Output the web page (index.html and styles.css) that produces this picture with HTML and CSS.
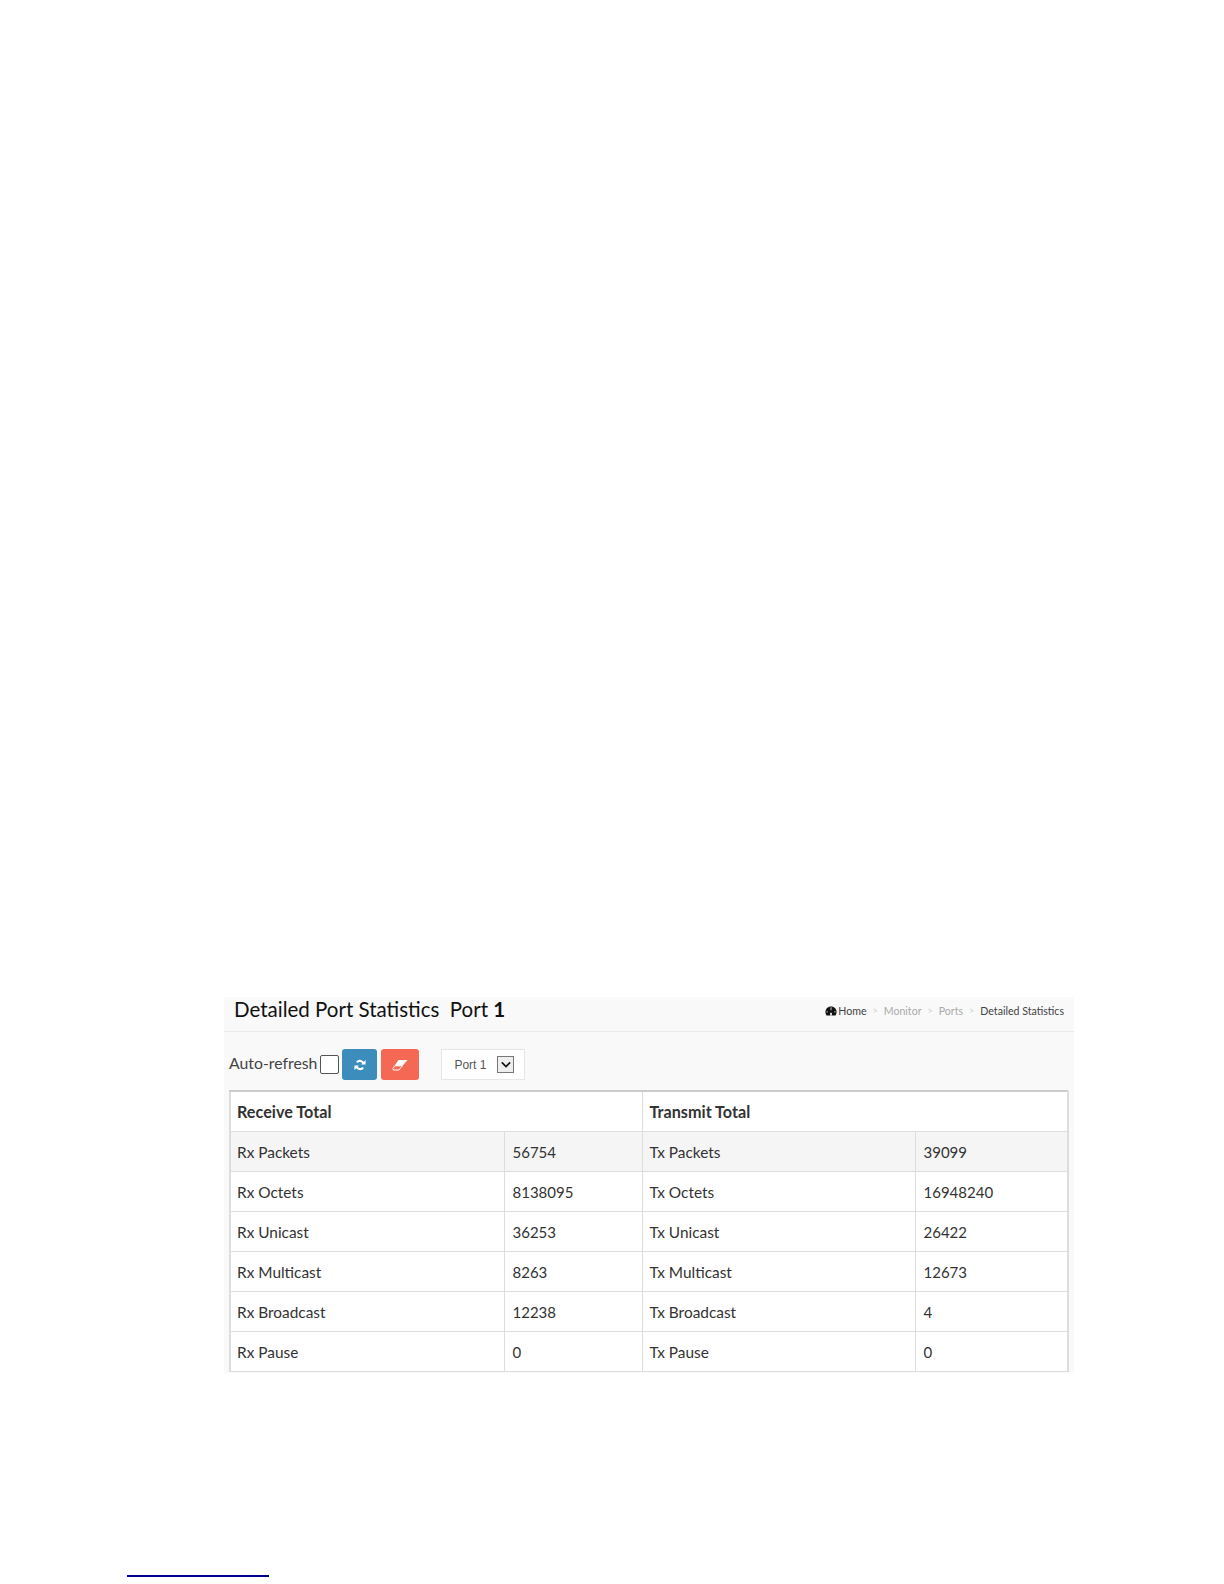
FILE: index.html
```html
<!DOCTYPE html>
<html lang="en">
<head>
<meta charset="utf-8">
<title>Detailed Port Statistics Port 1</title>
<link rel="stylesheet" href="styles.css">
</head>
<body>
<main class="panel">
  <header class="panel-head">
    <h1 class="title">Detailed Port Statistics&nbsp; Port <b>1</b></h1>
    <nav class="crumbs">
      <svg class="gauge" viewBox="0 0 14 12" aria-hidden="true"><path d="M7 .5C3.200.5.300 3.400.300 7.200c0 1.500.5 2.900 1.300 4.100h10.800c.8-1.200 1.300-2.600 1.300-4.100C13.700 3.400 10.800.5 7 .5z" fill="#111"/><path d="M6.500 1.500h1v3.500h-1zM6 8h2v3.300H6zM1.500 6.500h1.800v1H1.500zM10.700 6.500h1.800v1h-1.800z" fill="#f9f9f9"/></svg>
      <span class="crumb-home">Home</span><span class="sep">&gt;</span>
      <span class="crumb-mid">Monitor</span><span class="sep">&gt;</span>
      <span class="crumb-mid">Ports</span><span class="sep">&gt;</span>
      <span class="crumb-home">Detailed Statistics</span>
    </nav>
  </header>
  <div class="toolbar">
    <label class="auto">Auto-refresh</label>
    <span class="check"></span>
    <button class="btn btn-blue" type="button" aria-label="Refresh">
      <svg viewBox="0 0 14 14" width="12" height="12" aria-hidden="true"><path d="M11.300 5.500A4.600 4.600 0 0 0 3.300 4M2.700 8.500A4.600 4.600 0 0 0 10.700 10" fill="none" stroke="#fff" stroke-width="2.500"/><path d="M13.500 1.200v5.300H8.200zM.5 12.800V7.500h5.300z" fill="#fff"/></svg>
    </button>
    <button class="btn btn-red" type="button" aria-label="Clear">
      <svg viewBox="0 0 16 12" width="16" height="12" aria-hidden="true"><path d="M6.500 1H15.500L10.700 6.800H2.600z" fill="#fff"/><path d="M2.800 6.800h7.600L6.900 11H1.300L.9 9.500z" fill="none" stroke="#fff"/></svg>
    </button>
    <div class="port-select">
      <span>Port 1</span>
      <span class="arrow"><svg viewBox="0 0 12 8" width="10" height="7" aria-hidden="true"><path d="M1 1.500l5 5 5-5" fill="none" stroke="#111" stroke-width="2"/></svg></span>
    </div>
  </div>
  <table class="stats">
    <colgroup><col class="c1"><col class="c2"><col class="c3"><col class="c4"></colgroup>
    <thead>
      <tr><th colspan="2">Receive Total</th><th colspan="2">Transmit Total</th></tr>
    </thead>
    <tbody>
      <tr class="shade"><td>Rx Packets</td><td>56754</td><td>Tx Packets</td><td>39099</td></tr>
      <tr><td>Rx Octets</td><td>8138095</td><td>Tx Octets</td><td>16948240</td></tr>
      <tr><td>Rx Unicast</td><td>36253</td><td>Tx Unicast</td><td>26422</td></tr>
      <tr><td>Rx Multicast</td><td>8263</td><td>Tx Multicast</td><td>12673</td></tr>
      <tr><td>Rx Broadcast</td><td>12238</td><td>Tx Broadcast</td><td>4</td></tr>
      <tr><td>Rx Pause</td><td>0</td><td>Tx Pause</td><td>0</td></tr>
    </tbody>
  </table>
</main>
<div class="footnote-rule"></div>
</body>
</html>
```
FILE: styles.css
```css
html, body { margin: 0; padding: 0; background: #fff; }
body {
  height: 1584px;
  box-sizing: border-box;
  padding-top: 997px;
  overflow: hidden;
  font-family: Lato, "Open Sans", sans-serif;
  color: #333;
}
.panel {
  width: 850px;
  height: 376px;
  margin-left: 224px;
  background: #f9f9f9;
  box-sizing: border-box;
}
.panel-head {
  height: 35px;
  box-sizing: border-box;
  border-bottom: 1px solid #e9e9e9;
  display: flex;
  justify-content: space-between;
  align-items: center;
  padding: 0 10px 10px 10px;
}
.title {
  margin: 0;
  font-size: 20.500px;
  font-weight: 400;
  color: #111;
  white-space: nowrap;
}
.title b { font-weight: 700; }
.crumbs {
  display: flex;
  align-items: center;
  font-size: 10.600px;
  white-space: nowrap;
  padding-top: 3px;
}
.gauge { width: 12px; height: 10px; margin-right: 1px; }
.crumb-home { color: #444; }
.crumb-mid { color: #aaa; }
.sep { color: #ccc; margin: 0 6px; font-size: 9px; }
.toolbar {
  display: flex;
  align-items: center;
  height: 31px;
  margin-top: 17px;
  padding-left: 5px;
}
.auto { font-size: 15.800px; color: #444; line-height: 1; margin-top: -3px; }
.check {
  width: 17px;
  height: 17px;
  margin: 0 3px 0 3px;
  border: 1px solid #555;
  border-radius: 2px;
  background: #fff;
}
.btn {
  height: 31px;
  padding: 0;
  border: 0;
  border-radius: 3px;
  display: flex;
  align-items: center;
  justify-content: center;
}
.btn-blue { width: 35px; background: #3c8dbc; margin-right: 4px; }
.btn-red { width: 38px; background: #f56954; margin-right: 22px; }
.port-select {
  width: 84px;
  height: 31px;
  box-sizing: border-box;
  border: 1px solid #e6e6e6;
  background: #fff;
  display: flex;
  align-items: center;
  padding-left: 12px;
  gap: 11px;
  font-family: "Liberation Sans", sans-serif;
  font-size: 12px;
  color: #555;
}
.arrow {
  width: 17px;
  height: 17px;
  box-sizing: border-box;
  border: 1px solid #777;
  background: #eee;
  display: flex;
  align-items: center;
  justify-content: center;
}
.stats {
  margin: 10px 0 0 5px;
  width: 840px;
  table-layout: fixed;
  border-collapse: collapse;
  background: #fff;
  border-top: 2px solid #ccc;
  border-left: 2px solid #ddd;
  border-right: 2px solid #ddd;
  font-size: 15px;
  color: #333;
}
.c1 { width: 274px; }
.c2 { width: 138px; }
.c3 { width: 273px; }
.c4 { width: 153px; }
.stats th, .stats td {
  height: 40px;
  box-sizing: border-box;
  padding: 1px 8px 0;
  text-align: left;
  border-bottom: 1px solid #ddd;
  border-left: 1px solid #ddd;
}
.stats td:nth-child(odd) { font-size: 15.400px; padding-left: 7px; }
.stats th { font-weight: 700; font-size: 16.200px; padding-left: 7px; }
.stats th:first-child, .stats td:first-child { border-left: 0; padding-left: 6px; }
.shade td { background: #f5f5f5; }
.footnote-rule {
  width: 142px;
  height: 2px;
  margin: 202px 0 0 127px;
  background: #000090;
}
```
